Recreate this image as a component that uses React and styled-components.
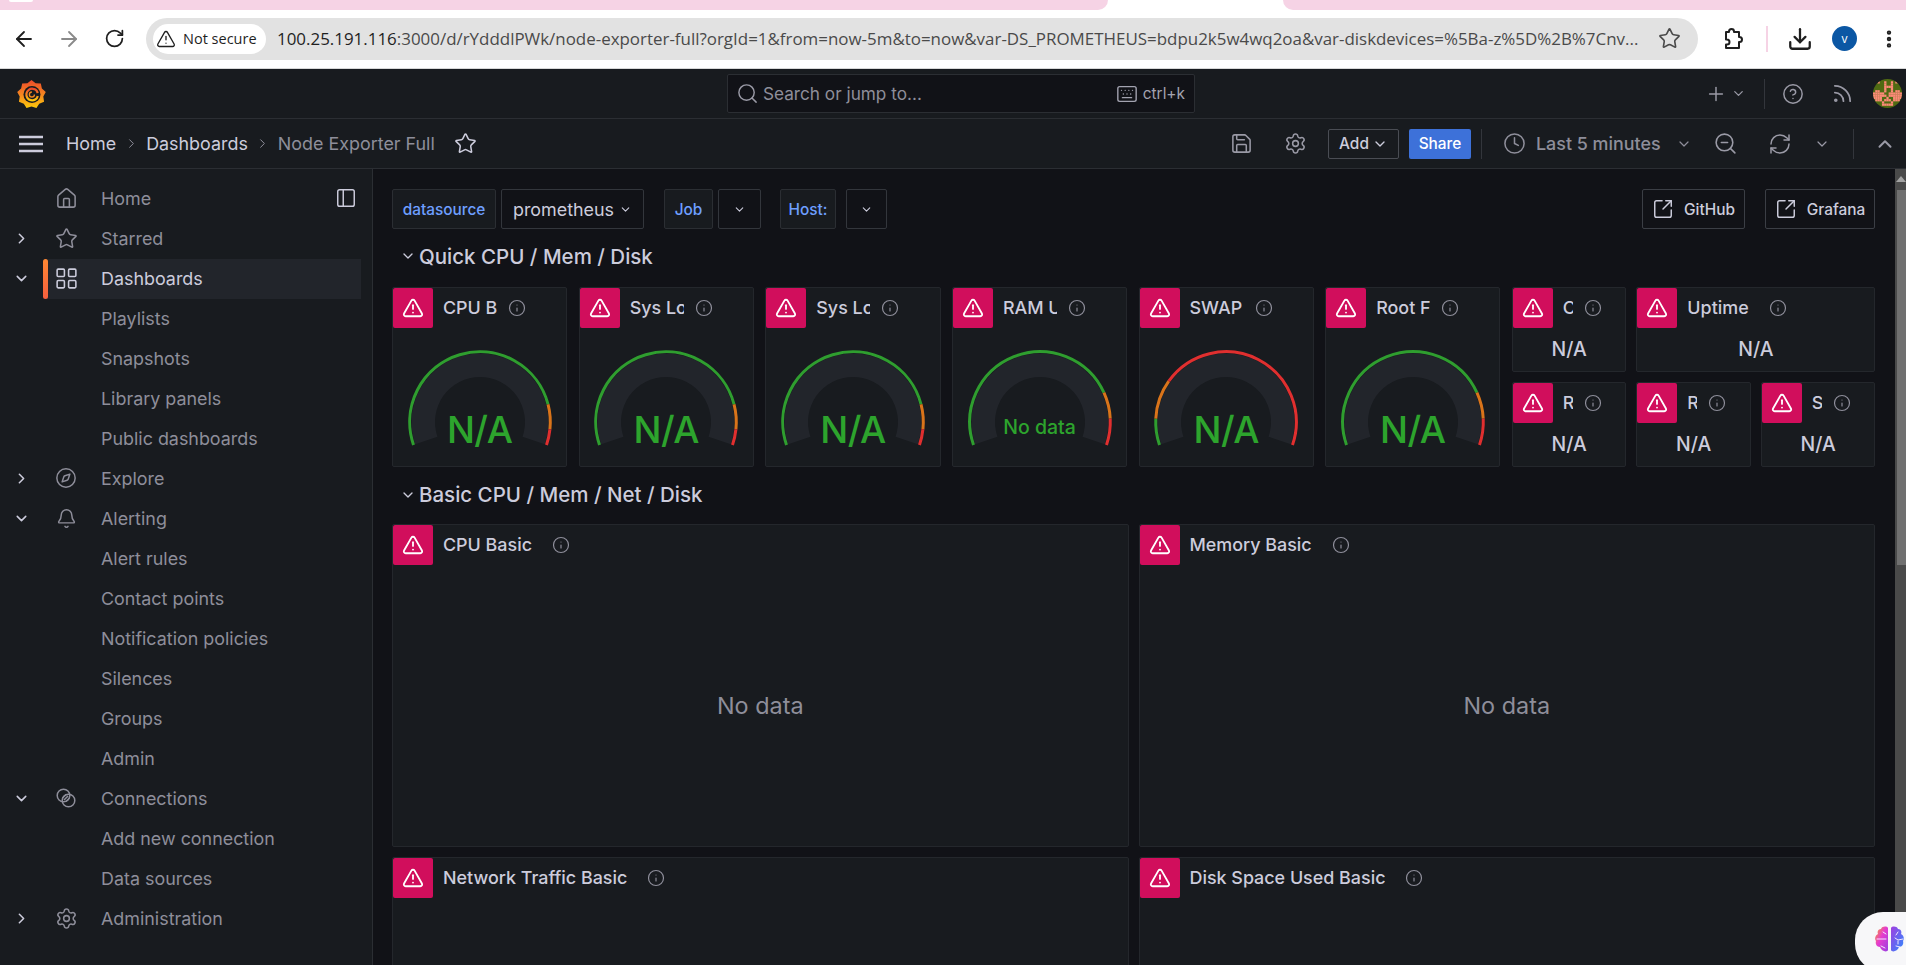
import React from 'react';
import styled, { createGlobalStyle } from 'styled-components';
import {
  ArrowLeft, ArrowRight, Bell, ChevronDown, ChevronRight, ChevronUp, CircleHelp, Clock, Compass,
  Download, EllipsisVertical, Home, Info, Keyboard, LayoutGrid, PanelLeft, Plus,
  RefreshCw, RotateCw, Rss, Save, Search, Settings, SquareArrowOutUpRight, Star, TriangleAlert, ZoomOut,
} from 'lucide-react';

const GlobalStyle = createGlobalStyle`
  html, body { margin: 0; padding: 0; height: 100%; overflow: hidden; background: #111217; }
  * { box-sizing: border-box; }
  body { font-family: Inter, "Liberation Sans", sans-serif; }
`;

const URL_TEXT = '100.25.191.116:3000/d/rYdddlPWk/node-exporter-full?orgId=1&from=now-5m&to=now&var-DS_PROMETHEUS=bdpu2k5w4wq2oa&var-diskdevices=%5Ba-z%5D%2B%7Cnv...';

const Page = styled.div`
  width: 1906px;
  height: 965px;
  display: flex;
  flex-direction: column;
  overflow: hidden;
  position: relative;
  background: #111217;
`;

const TabStrip = styled.div`
  height: 10px;
  flex: none;
  background: #fff;
  display: flex;
  position: relative;

  &::after {
    content: '';
    position: absolute;
    left: 9px;
    top: 0;
    width: 24px;
    height: 2px;
    background: #fff;
    border-radius: 0 0 2px 2px;
  }
`;

const TabPiece = styled.div`
  background: #f6d3e5;
  width: ${(p) => p.$w}px;
  flex: ${(p) => (p.$w ? 'none' : 1)};
  margin-left: ${(p) => p.$ml || 0}px;
  border-radius: ${(p) => p.$radius || '0'};
`;

const BrowserBar = styled.div`
  height: 59px;
  flex: none;
  background: #fff;
  display: flex;
  align-items: center;
  border-bottom: 1px solid #d8d8d8;
  padding: 0 0 1px 11px;
  font-family: "Open Sans", "Noto Sans", sans-serif;
`;

const NavGlyph = styled.div`
  display: flex;
  align-items: center;
  justify-content: center;
  width: ${(p) => p.$w}px;
  color: ${(p) => p.$color || '#1f1f1f'};
  flex: none;
`;

const Omnibox = styled.div`
  width: 1552px;
  height: 42px;
  margin-left: 19px;
  border-radius: 21px;
  background: #e2e2e2;
  display: flex;
  align-items: center;
  padding-left: 7px;
  flex: none;
`;

const SecureChip = styled.div`
  width: 113px;
  height: 30px;
  border-radius: 15px;
  background: #fff;
  display: flex;
  align-items: center;
  gap: 7px;
  padding-left: 3px;
  font-size: 14.5px;
  color: #1f1f1f;
  flex: none;
  white-space: nowrap;
`;

const UrlText = styled.div`
  margin-left: 11px;
  font-size: 16.93px;
  color: #4a4a4a;
  white-space: nowrap;
  width: 1380px;
  overflow: hidden;
  flex: none;

  b {
    font-weight: 400;
    color: #1f1f1f;
  }
`;

const BarDivider = styled.div`
  width: 2px;
  height: 26px;
  background: #f6d3e5;
  flex: none;
`;

const ProfileDot = styled.div`
  width: 25px;
  height: 25px;
  border-radius: 50%;
  background: #0b57a4;
  color: #fff;
  font-size: 12px;
  display: flex;
  align-items: center;
  justify-content: center;
  flex: none;
`;

const TopNav = styled.div`
  height: 50px;
  flex: none;
  background: #181b1f;
  border-bottom: 1px solid #2b2e33;
  display: flex;
  align-items: center;
  padding-left: 17px;
  color: #ccccdc;
`;

const SearchBox = styled.div`
  width: 468px;
  height: 39px;
  margin-left: 681px;
  background: #111217;
  border: 1px solid #2b2e33;
  border-radius: 2px;
  display: flex;
  align-items: center;
  padding: 0 9px 0 8px;
  color: #9a9aa6;
  font-size: 17.2px;
  flex: none;
`;

const SearchHint = styled.span`
  margin-left: 4px;
  color: #8e8e9a;
`;

const Shortcut = styled.div`
  margin-left: auto;
  display: flex;
  align-items: center;
  gap: 5px;
  font-size: 15.4px;
  color: #a3a3b0;
`;

const NavRight = styled.div`
  margin-left: auto;
  display: flex;
  align-items: center;
  color: #9a9aa6;
  padding-right: 4px;
`;

const Rule = styled.div`
  width: 1px;
  height: ${(p) => p.$h || 30}px;
  background: #33363c;
  margin: 0 ${(p) => p.$mr ?? 0}px 0 ${(p) => p.$ml ?? 0}px;
  flex: none;
`;

const Toolbar = styled.div`
  height: 50px;
  flex: none;
  background: #181b1f;
  border-bottom: 1px solid #2b2e33;
  display: flex;
  align-items: center;
  padding-left: 18px;
  color: #ccccdc;
  font-size: 17.9px;
`;

const Crumbs = styled.div`
  display: flex;
  align-items: center;
  margin-left: 22px;
`;

const Crumb = styled.span`
  color: ${(p) => (p.$muted ? '#8e8e9a' : '#ccccdc')};
`;

const CrumbSep = styled.span`
  display: flex;
  color: #8e8e9a;
  margin: 0 7.5px;
`;

const ToolRight = styled.div`
  margin-left: auto;
  display: flex;
  align-items: center;
  color: #9a9aa6;
  padding-right: 1px;
`;

const ToolIcon = styled.div`
  width: ${(p) => p.$w}px;
  margin-left: ${(p) => p.$ml || 0}px;
  color: ${(p) => p.$color || 'inherit'};
  display: flex;
  align-items: center;
  justify-content: center;
  flex: none;
`;

const AddButton = styled.div`
  width: 71px;
  height: 30px;
  margin-left: 6px;
  border: 1px solid #4a4d54;
  border-radius: 2px;
  display: flex;
  align-items: center;
  justify-content: center;
  gap: 3px;
  font-size: 15.4px;
  font-weight: 500;
  color: #ccccdc;
`;

const ShareButton = styled.div`
  width: 62px;
  height: 30px;
  margin-left: 10px;
  background: #3d71d9;
  border-radius: 2px;
  display: flex;
  align-items: center;
  justify-content: center;
  font-size: 15.4px;
  font-weight: 500;
  color: #fff;
`;

const TimeButton = styled.div`
  width: 203px;
  display: flex;
  align-items: center;
  padding-left: 11px;
  font-size: 17.9px;
  font-weight: 500;
  color: #8e8e9a;
  flex: none;

  span {
    margin: 0 15px 0 10px;
    white-space: nowrap;
  }
`;

const Body = styled.div`
  flex: 1;
  min-height: 0;
  display: flex;
`;

const Sidebar = styled.nav`
  width: 373px;
  flex: none;
  background: #181b1f;
  border-right: 1px solid #2b2e33;
  padding-top: 10px;
  position: relative;
`;

const DockIcon = styled.div`
  position: absolute;
  top: 18px;
  left: 335px;
  display: flex;
  color: #ccccdc;
`;

const NavRow = styled.div`
  height: 40px;
  display: flex;
  align-items: center;
  position: relative;
  padding-bottom: 2px;
  font-size: 17.9px;
  color: ${(p) => (p.$active ? '#ccccdc' : '#8e8e9a')};
  background: ${(p) => (p.$active ? 'linear-gradient(90deg, transparent 44px, #22252b 44px, #22252b 361px, transparent 361px)' : 'none')};

  &::before {
    content: '';
    display: ${(p) => (p.$active ? 'block' : 'none')};
    position: absolute;
    left: 43px;
    top: 0;
    bottom: 0;
    width: 5px;
    border-radius: 3px;
    background: linear-gradient(0deg, #f55f3e, #ff8833);
  }
`;

const NavCaret = styled.div`
  width: 42px;
  flex: none;
  display: flex;
  justify-content: center;
  color: #ccccdc;
`;

const NavIcon = styled.div`
  width: 48px;
  flex: none;
  display: flex;
  justify-content: center;
  margin-right: 11px;
  color: ${(p) => (p.$active ? '#ccccdc' : '#8e8e9a')};
`;

const Main = styled.main`
  flex: 1;
  min-width: 0;
  padding: 20px 20px 0 19px;
  overflow: hidden;
`;

const VarRow = styled.div`
  display: flex;
  height: 40px;
  align-items: stretch;
`;

const VarLabel = styled.div`
  width: ${(p) => p.$w}px;
  margin-left: ${(p) => p.$ml || 0}px;
  background: #181b1f;
  border: 1px solid #2b2e33;
  border-radius: 2px;
  color: #6e9fff;
  font-size: 15.4px;
  font-weight: 500;
  display: flex;
  align-items: center;
  justify-content: center;
  flex: none;
`;

const VarSelect = styled.div`
  width: ${(p) => p.$w}px;
  margin-left: ${(p) => p.$ml || 5}px;
  background: #111217;
  border: 1px solid #33363c;
  border-radius: 2px;
  color: #ccccdc;
  font-size: 17.9px;
  display: flex;
  align-items: center;
  justify-content: center;
  gap: 5px;
  flex: none;
`;

const LinkButton = styled.div`
  width: ${(p) => p.$w}px;
  margin-left: ${(p) => p.$ml}px;
  border: 1px solid #3b3e45;
  border-radius: 2px;
  color: #ccccdc;
  font-size: 15.4px;
  font-weight: 500;
  display: flex;
  align-items: center;
  justify-content: center;
  gap: 10px;
  flex: none;
`;

const SectionRow = styled.div`
  height: ${(p) => p.$h}px;
  display: flex;
  align-items: center;
  color: #ccccdc;
  font-size: 20.5px;
  font-weight: 500;
  padding: 0 0 ${(p) => p.$pb}px 8px;
  gap: 3px;
`;

const QuickGrid = styled.div`
  display: grid;
  grid-template-columns: repeat(6, 175.25px) 363.5px;
  column-gap: 11.4px;
  height: 180px;
`;

const StatGrid = styled.div`
  display: grid;
  grid-template-columns: repeat(3, 114.5px);
  grid-template-rows: 85px 85px;
  gap: 10px;
`;

const Panel = styled.section`
  background: #181b1f;
  border: 1px solid #24272c;
  border-radius: 2px;
  display: flex;
  flex-direction: column;
  min-width: 0;
  grid-column: ${(p) => (p.$span ? `span ${p.$span}` : 'auto')};
  height: ${(p) => (p.$h ? `${p.$h}px` : 'auto')};
  overflow: hidden;
`;

const PanelHead = styled.header`
  display: flex;
  align-items: center;
  height: 40px;
  flex: none;
  color: #ccccdc;
  font-size: 17.9px;
  font-weight: 500;
`;

const AlertBox = styled.div`
  width: 40px;
  height: 40px;
  background: #d10e5c;
  border-radius: 2px;
  display: flex;
  align-items: center;
  justify-content: center;
  color: #fff;
  flex: none;
`;

const PanelTitle = styled.div`
  margin: 0 0 2px 10px;
  white-space: nowrap;
  overflow: hidden;
  width: ${(p) => (p.$w ? `${p.$w}px` : 'auto')};
  flex: none;
`;

const InfoMark = styled.div`
  margin-left: ${(p) => p.$ml ?? 11}px;
  color: #8e8e9a;
  display: flex;
  flex: none;
`;

const GaugeBody = styled.div`
  flex: 1;
  position: relative;
  display: flex;
  justify-content: center;
  padding-top: 21px;
`;

const GaugeValue = styled.div`
  position: absolute;
  left: 0;
  right: 0;
  top: ${(p) => p.$top}px;
  text-align: center;
  line-height: 1;
  color: #2da42d;
  font-weight: 500;
  letter-spacing: ${(p) => p.$tight || 0}px;
  font-size: ${(p) => p.$size}px;
`;

const StatValue = styled.div`
  flex: 1;
  display: flex;
  align-items: center;
  justify-content: center;
  color: #ccccdc;
  font-size: 19.4px;
  font-weight: 500;
  padding-bottom: 1px;
`;

const BasicGrid = styled.div`
  display: grid;
  grid-template-columns: 1fr 1fr;
  gap: 10px;
`;

const NoData = styled.div`
  flex: 1;
  display: flex;
  align-items: center;
  justify-content: center;
  color: #8e8e9a;
  font-size: 23.4px;
`;

const Scrollbar = styled.div`
  width: 11px;
  flex: none;
  background: #4a4a4a;
  display: flex;
  flex-direction: column;
  align-items: flex-end;
  padding-top: 7px;
`;

const ScrollArrow = styled.div`
  width: 0;
  height: 0;
  margin-right: 0.5px;
  border-left: 5px solid transparent;
  border-right: 5px solid transparent;
  border-bottom: 6px solid #a3a3a3;
  flex: none;
`;

const ScrollThumb = styled.div`
  width: 9px;
  height: 375px;
  margin-top: 8px;
  background: #707070;
  flex: none;
`;

const AssistBubble = styled.div`
  position: absolute;
  left: 1855px;
  top: 912px;
  width: 80px;
  height: 60px;
  border-radius: 28px;
  background: #f7f7f9;
  padding: 14px 0 0 19px;
`;

const START = -19;
const SWEEP = 218;

const polar = (cx, cy, r, deg) => {
  const a = (deg * Math.PI) / 180;
  return [cx - r * Math.cos(a), cy - r * Math.sin(a)];
};

const arcPath = (r, from, to) => {
  const [x1, y1] = polar(75, 73, r, from);
  const [x2, y2] = polar(75, 73, r, to);
  return `M${x1} ${y1}A${r} ${r} 0 ${to - from > 180 ? 1 : 0} 1 ${x2} ${y2}`;
};

const trackPath = () => {
  const from = START;
  const to = START + SWEEP;
  const [x1, y1] = polar(75, 73, 68.5, from);
  const [x2, y2] = polar(75, 73, 68.5, to);
  const [x3, y3] = polar(75, 73, 45, to);
  const [x4, y4] = polar(75, 73, 45, from);
  return `M${x1} ${y1}A68.5 68.5 0 1 1 ${x2} ${y2}L${x3} ${y3}A45 45 0 1 0 ${x4} ${y4}Z`;
};

const Gauge = ({ stops, value, size = 37, top = 83, tight = -0.5 }) => {
  let prev = 0;
  return (
    <GaugeBody>
      <svg width="150" height="104" viewBox="0 0 150 104">
        <path d={trackPath()} fill="#22252b" />
        {stops.map(([end, color]) => {
          const d = arcPath(70.3, START + prev * SWEEP, START + end * SWEEP);
          prev = end;
          return <path key={color + end} d={d} fill="none" stroke={color} strokeWidth="3" />;
        })}
      </svg>
      <GaugeValue $size={size} $top={top} $tight={tight}>{value}</GaugeValue>
    </GaugeBody>
  );
};

const GRN = '#2f9e2f';
const ORG = '#d9741a';
const RED = '#e02f2f';

const gauges = [
  { title: 'CPU Busy', clip: 54, stops: [[0.846, GRN], [0.94, ORG], [1, RED]] },
  { title: 'Sys Load', clip: 54, stops: [[0.846, GRN], [0.94, ORG], [1, RED]] },
  { title: 'Sys Load', clip: 54, stops: [[0.846, GRN], [0.94, ORG], [1, RED]] },
  { title: 'RAM Used', clip: 54, value: 'No data', size: 19.5, top: 90, tight: 0, stops: [[0.8, GRN], [0.9, ORG], [1, RED]] },
  { title: 'SWAP Used', clip: 54, stops: [[0.1, GRN], [0.25, ORG], [1, RED]] },
  { title: 'Root FS Used', clip: 54, stops: [[0.8, GRN], [0.9, ORG], [1, RED]] },
];

const stats = [
  { title: 'CPU Cores', clip: 10, span: 1 },
  { title: 'Uptime', clip: 81, span: 2 },
  { title: 'RootFS Total', clip: 10, span: 1 },
  { title: 'RAM Total', clip: 10, span: 1 },
  { title: 'SWAP Total', clip: 10, span: 1 },
];

const basicTop = ['CPU Basic', 'Memory Basic'];
const basicBottom = ['Network Traffic Basic', 'Disk Space Used Basic'];

const ConnectionsIcon = () => (
  <svg width="20" height="20" viewBox="0 0 20 20" fill="none" stroke="currentColor" strokeWidth="1.5">
    <circle cx="7.5" cy="7.5" r="6.3" />
    <circle cx="12.5" cy="12.5" r="6.3" />
    <path d="M8 12l4-4M6.5 10l3.5-3.5M10 13.5l3.5-3.5" />
  </svg>
);

const nav = [
  { label: 'Home', icon: <Home size={23} strokeWidth={1.6} /> },
  { label: 'Starred', caret: 'right', icon: <Star size={23} strokeWidth={1.6} /> },
  { label: 'Dashboards', caret: 'down', active: true, icon: <LayoutGrid size={25} strokeWidth={1.5} /> },
  { label: 'Playlists' },
  { label: 'Snapshots' },
  { label: 'Library panels' },
  { label: 'Public dashboards' },
  { label: 'Explore', caret: 'right', icon: <Compass size={22} strokeWidth={1.6} /> },
  { label: 'Alerting', caret: 'down', icon: <Bell size={21} strokeWidth={1.7} /> },
  { label: 'Alert rules' },
  { label: 'Contact points' },
  { label: 'Notification policies' },
  { label: 'Silences' },
  { label: 'Groups' },
  { label: 'Admin' },
  { label: 'Connections', caret: 'down', icon: <ConnectionsIcon /> },
  { label: 'Add new connection' },
  { label: 'Data sources' },
  { label: 'Administration', caret: 'right', icon: <Settings size={23} strokeWidth={1.6} /> },
];

const GrafanaLogo = () => {
  const pts = [];
  for (let i = 0; i < 18; i += 1) {
    const a = (i / 18) * Math.PI * 2 - Math.PI / 2;
    const r = i % 2 === 0 ? 15 : 12.4;
    pts.push(`${15 + r * Math.cos(a)},${15.5 + r * Math.sin(a)}`);
  }
  return (
    <svg width="29" height="30" viewBox="0 0 30 30">
      <defs>
        <linearGradient id="gf" x1="0" y1="0" x2="0" y2="1">
          <stop offset="0" stopColor="#ee4a2b" />
          <stop offset="0.55" stopColor="#f58a1f" />
          <stop offset="1" stopColor="#fbca0a" />
        </linearGradient>
      </defs>
      <polygon points={pts.join(' ')} fill="url(#gf)" />
      <circle cx="15.5" cy="15.5" r="8.8" fill="#181b1f" />
      <path d="M21.5 17a6 6 0 1 1-5-7.4c3 .4 4.6 2.4 4.8 4.4" fill="none" stroke="url(#gf)" strokeWidth="2.3" />
      <path d="M18 15.5a2.6 2.6 0 1 1-2.6-2.6" fill="none" stroke="#f58a1f" strokeWidth="1.4" />
    </svg>
  );
};

const HamburgerIcon = () => (
  <svg width="26" height="18" viewBox="0 0 26 18" stroke="#ccccdc" strokeWidth="2.4">
    <path d="M1 2h24M1 9h24M1 16h24" />
  </svg>
);

const ExtensionIcon = () => (
  <svg width="24" height="24" viewBox="0 0 24 24" fill="none" stroke="#1f1f1f" strokeWidth="2" strokeLinejoin="round">
    <path d="M9 5V4.5a2.5 2.5 0 0 1 5 0V5h5v5h.5a2.5 2.5 0 0 1 0 5H19v6H6v-3.5h1a2.5 2.5 0 0 0 0-5H6V5z" />
  </svg>
);

const AVATAR_ROWS = [
  '0000000000000',
  '0010010010100',
  '0000010010000',
  '0000011110000',
  '0000010010000',
  '0110010010110',
  '1111100111111',
  '1111110111111',
  '1111001001111',
  '0111011101110',
  '0000100010000',
  '0000111110000',
  '0000000000000',
];

const Avatar = () => (
  <svg width="29" height="29" viewBox="0 0 13 13">
    <clipPath id="av"><circle cx="6.5" cy="6.5" r="6.5" /></clipPath>
    <g clipPath="url(#av)">
      <rect width="13" height="13" fill="#4f6a12" />
      {AVATAR_ROWS.map((row, y) => row.split('').map((c, x) => (
        c === '1' ? <rect key={`${x}-${y}`} x={x} y={y} width="1.02" height="1.02" fill="#fd8a78" /> : null
      )))}
    </g>
  </svg>
);

const BrainIcon = () => (
  <svg width="31" height="28" viewBox="0 0 31 28">
    <defs>
      <linearGradient id="brL" x1="0" y1="0" x2="1" y2="1">
        <stop offset="0" stopColor="#f7a021" />
        <stop offset="0.45" stopColor="#e63ccf" />
        <stop offset="1" stopColor="#9a3fe0" />
      </linearGradient>
      <linearGradient id="brR" x1="0" y1="0" x2="1" y2="1">
        <stop offset="0" stopColor="#a03fe0" />
        <stop offset="1" stopColor="#2e8bff" />
      </linearGradient>
    </defs>
    <path d="M14 2c-1-2-6-2-7 1-3 0-4 3-3 5-2 1-4 4-2 7-1 3 1 6 4 6 1 4 7 6 8 3z" fill="url(#brL)" />
    <path d="M17 2c1-2 6-2 7 1 3 0 4 3 3 5 2 1 4 4 2 7 1 3-1 6-4 6-1 4-7 6-8 3z" fill="url(#brR)" />
    <path d="M3 13h9M7 20l4 2M9 6l3 2M24 6l-2 3M29 13l-5 1-3-2M24 15v3M26 21l-4-1" fill="none" stroke="#f3e6ff" strokeWidth="1" strokeLinecap="round" />
  </svg>
);

const PanelHeader = ({ title, clip, infoGap }) => (
  <PanelHead>
    <AlertBox><TriangleAlert size={22} strokeWidth={2} /></AlertBox>
    <PanelTitle $w={clip}>{title}</PanelTitle>
    <InfoMark $ml={infoGap}><Info size={18} strokeWidth={1.6} /></InfoMark>
  </PanelHead>
);

const BasicPanel = ({ title, h, empty }) => (
  <Panel $h={h}>
    <PanelHeader title={title} infoGap={20} />
    {empty && <NoData>No data</NoData>}
  </Panel>
);

export default function App() {
  return (
    <Page>
      <GlobalStyle />
      <TabStrip>
        <TabPiece $w={1108} $radius="0 0 10px 0" />
        <TabPiece $ml={175} $radius="0 0 0 10px" />
      </TabStrip>
      <BrowserBar>
        <NavGlyph $w={25}><ArrowLeft size={24} strokeWidth={1.8} /></NavGlyph>
        <NavGlyph $w={65} $color="#8a8a8a"><ArrowRight size={24} strokeWidth={1.8} /></NavGlyph>
        <NavGlyph $w={26}><RotateCw size={21} strokeWidth={2} /></NavGlyph>
        <Omnibox>
          <SecureChip><TriangleAlert size={20} strokeWidth={1.6} />Not secure</SecureChip>
          <UrlText><b>100.25.191.116</b>{URL_TEXT.slice(14)}</UrlText>
          <NavGlyph $w={24} $color="#4a4a4a"><Star size={23} strokeWidth={1.7} /></NavGlyph>
        </Omnibox>
        <NavGlyph $w={68}><ExtensionIcon /></NavGlyph>
        <BarDivider />
        <NavGlyph $w={64}><Download size={26} strokeWidth={2.1} /></NavGlyph>
        <ProfileDot>v</ProfileDot>
        <NavGlyph $w={64}><EllipsisVertical size={22} strokeWidth={2.8} /></NavGlyph>
      </BrowserBar>
      <TopNav>
        <GrafanaLogo />
        <SearchBox>
          <Search size={23} strokeWidth={1.5} />
          <SearchHint>Search or jump to...</SearchHint>
          <Shortcut><Keyboard size={22} strokeWidth={1.5} />ctrl+k</Shortcut>
        </SearchBox>
        <NavRight>
          <Plus size={22} strokeWidth={1.6} />
          <ToolIcon $w={20} $ml={1}><ChevronDown size={15} strokeWidth={2} /></ToolIcon>
          <Rule $h={30} $ml={16} $mr={17} />
          <CircleHelp size={22} strokeWidth={1.6} />
          <ToolIcon $w={56} $ml={10}><Rss size={23} strokeWidth={1.8} /></ToolIcon>
          <ToolIcon $w={29} $ml={3}><Avatar /></ToolIcon>
        </NavRight>
      </TopNav>
      <Toolbar>
        <HamburgerIcon />
        <Crumbs>
          <Crumb>Home</Crumb>
          <CrumbSep><ChevronRight size={15} strokeWidth={1.6} /></CrumbSep>
          <Crumb>Dashboards</Crumb>
          <CrumbSep><ChevronRight size={15} strokeWidth={1.6} /></CrumbSep>
          <Crumb $muted>Node Exporter Full</Crumb>
          <ToolIcon $w={23} $ml={19} $color="#ccccdc"><Star size={23} strokeWidth={1.6} /></ToolIcon>
        </Crumbs>
        <ToolRight>
          <ToolIcon $w={54}><Save size={23} strokeWidth={1.6} /></ToolIcon>
          <ToolIcon $w={54}><Settings size={23} strokeWidth={1.6} /></ToolIcon>
          <AddButton>Add<ChevronDown size={16} strokeWidth={2} /></AddButton>
          <ShareButton>Share</ShareButton>
          <Rule $ml={10} $mr={10} />
          <TimeButton>
            <Clock size={23} strokeWidth={1.6} />
            <span>Last 5 minutes</span>
            <ChevronDown size={16} strokeWidth={1.8} />
          </TimeButton>
          <ToolIcon $w={40} $ml={10}><ZoomOut size={25} strokeWidth={1.5} /></ToolIcon>
          <ToolIcon $w={40} $ml={15}><RefreshCw size={24} strokeWidth={1.5} /></ToolIcon>
          <ToolIcon $w={32} $ml={6}><ChevronDown size={16} strokeWidth={1.8} /></ToolIcon>
          <Rule $ml={15} />
          <ToolIcon $w={40} $ml={11}><ChevronUp size={22} strokeWidth={2.2} /></ToolIcon>
        </ToolRight>
      </Toolbar>
      <Body>
        <Sidebar>
          <DockIcon><PanelLeft size={22} strokeWidth={1.6} /></DockIcon>
          {nav.map((item) => (
            <NavRow key={item.label} $active={item.active}>
              <NavCaret>
                {item.caret === 'right' && <ChevronRight size={17} strokeWidth={2.2} />}
                {item.caret === 'down' && <ChevronDown size={17} strokeWidth={2.2} />}
              </NavCaret>
              <NavIcon $active={item.active}>{item.icon}</NavIcon>
              {item.label}
            </NavRow>
          ))}
        </Sidebar>
        <Main>
          <VarRow>
            <VarLabel $w={104}>datasource</VarLabel>
            <VarSelect $w={143}>prometheus<ChevronDown size={13} strokeWidth={2} /></VarSelect>
            <VarLabel $w={49} $ml={20}>Job</VarLabel>
            <VarSelect $w={43}><ChevronDown size={13} strokeWidth={2} /></VarSelect>
            <VarLabel $w={56} $ml={19}>Host:</VarLabel>
            <VarSelect $w={41} $ml={10}><ChevronDown size={13} strokeWidth={2} /></VarSelect>
            <LinkButton $w={103} $ml={755}><SquareArrowOutUpRight size={22} strokeWidth={1.6} />GitHub</LinkButton>
            <LinkButton $w={110} $ml={20}><SquareArrowOutUpRight size={22} strokeWidth={1.6} />Grafana</LinkButton>
          </VarRow>
          <SectionRow $h={58} $pb={4}><ChevronDown size={16} strokeWidth={2} />Quick CPU / Mem / Disk</SectionRow>
          <QuickGrid>
            {gauges.map((g, i) => (
              <Panel key={i}>
                <PanelHeader title={g.title} clip={g.clip} />
                <Gauge stops={g.stops} value={g.value || 'N/A'} size={g.size} top={g.top} tight={g.tight} />
              </Panel>
            ))}
            <StatGrid>
              {stats.map((s) => (
                <Panel key={s.title} $span={s.span}>
                  <PanelHeader title={s.title} clip={s.clip} infoGap={s.clip === 81 ? 1 : 11} />
                  <StatValue>N/A</StatValue>
                </Panel>
              ))}
            </StatGrid>
          </QuickGrid>
          <SectionRow $h={57} $pb={2}><ChevronDown size={16} strokeWidth={2} />Basic CPU / Mem / Net / Disk</SectionRow>
          <BasicGrid>
            {basicTop.map((t) => <BasicPanel key={t} title={t} h={323} empty />)}
            {basicBottom.map((t) => <BasicPanel key={t} title={t} h={323} />)}
          </BasicGrid>
        </Main>
        <Scrollbar>
          <ScrollArrow />
          <ScrollThumb />
        </Scrollbar>
      </Body>
      <AssistBubble><BrainIcon /></AssistBubble>
    </Page>
  );
}
